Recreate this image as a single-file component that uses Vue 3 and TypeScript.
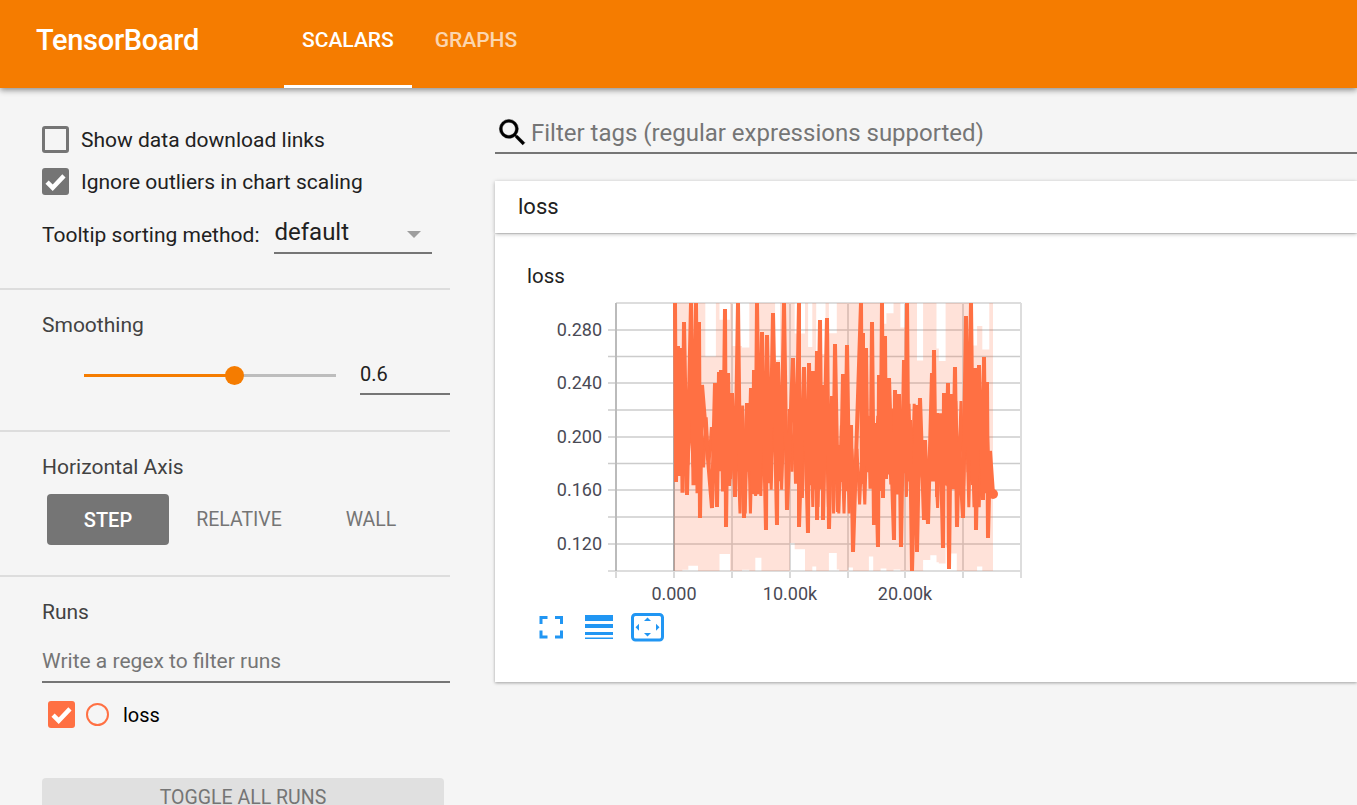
<template>
  <div class="page">
    <header class="topbar">
      <div class="brand">TensorBoard</div>
      <nav class="tabs">
        <div class="tab active">SCALARS</div>
        <div class="tab">GRAPHS</div>
      </nav>
    </header>

    <div class="body">
      <aside class="sidebar">
        <section class="group options">
          <label class="check-row">
            <span class="box"></span>
            <span>Show data download links</span>
          </label>
          <label class="check-row">
            <span class="box checked">
              <svg viewBox="0 0 24 24"><path d="M4.5 12.5l5 5 10-10.500" /></svg>
            </span>
            <span>Ignore outliers in chart scaling</span>
          </label>
          <div class="sort-row">
            <span>Tooltip sorting method:</span>
            <div class="select">
              <span>default</span>
              <i class="caret"></i>
            </div>
          </div>
        </section>

        <section class="group smoothing">
          <div class="group-title">Smoothing</div>
          <div class="slider-row">
            <div class="slider">
              <div class="slider-fill" :style="{ width: smoothing * 100 + '%' }"></div>
              <div class="slider-knob" :style="{ left: smoothing * 100 + '%' }"></div>
            </div>
            <div class="slider-value">{{ smoothing }}</div>
          </div>
        </section>

        <section class="group axis">
          <div class="group-title">Horizontal Axis</div>
          <div class="axis-buttons">
            <button v-for="m in axisModes" :key="m" class="axis-btn" :class="{ on: m === 'STEP' }">{{ m }}</button>
          </div>
        </section>

        <section class="group runs">
          <div class="group-title">Runs</div>
          <div class="regex">Write a regex to filter runs</div>
          <label class="run-row">
            <span class="box run">
              <svg viewBox="0 0 24 24"><path d="M4.5 12.500l5 5 10-10.500" /></svg>
            </span>
            <span class="run-dot"></span>
            <span>loss</span>
          </label>
          <button class="toggle">TOGGLE ALL RUNS</button>
        </section>
      </aside>

      <main class="content">
        <div class="filter">
          <svg class="search" viewBox="0 0 24 24">
            <path d="M15.500 14h-.79l-.28-.27A6.470 6.470 0 0 0 16 9.500 6.500 6.500 0 1 0 9.500 16c1.610 0 3.090-.59 4.230-1.570l.27.28v.79l5 4.990L20.490 19l-4.990-5zm-6 0C7.010 14 5 11.990 5 9.500S7.010 5 9.500 5 14 7.010 14 9.500 11.990 14 9.500 14z" />
          </svg>
          <span>Filter tags (regular expressions supported)</span>
        </div>

        <div class="tag-head">loss</div>
        <div class="card">
          <div class="card-title">loss</div>
          <svg class="chart" viewBox="530 295 500 350" width="500" height="350">
            <defs>
              <clipPath id="plot"><rect x="616" y="303" width="405" height="268" /></clipPath>
            </defs>

            <g class="grid">
              <line v-for="y in gridY" :key="'h' + y" x1="608" x2="1021" :y1="y" :y2="y" />
              <line v-for="x in gridX" :key="'v' + x" :x1="x" :x2="x" y1="303" y2="578" />
            </g>
            <line class="edge" x1="616" x2="1021" y1="303" y2="303" />
            <line class="edge" x1="608" x2="1021" y1="571" y2="571" />
            <line class="edge" x1="1021" x2="1021" y1="303" y2="578" />
            <line class="axis-line" x1="616" x2="616" y1="303" y2="571" />
            <line class="axis-line dark" x1="674" x2="674" y1="303" y2="571" />

            <g clip-path="url(#plot)">
              <path class="raw" :d="rawPath" />
              <path class="body-band" :d="bandPath" />
              <path class="smooth" :d="smoothPath" />
            </g>
            <circle cx="993" cy="494" r="5" fill="#ff7043" />

            <text v-for="t in yLabels" :key="t.label" class="tick" x="602" :y="t.y + 6" text-anchor="end">{{ t.label }}</text>
            <text v-for="t in xLabels" :key="t.label" class="tick" :x="t.x" y="600" text-anchor="middle">{{ t.label }}</text>

            <!-- fullscreen -->
            <path class="ico-stroke" d="M541 624v-6.500h6.500M555 617.500h6.500v6.500M561.500 630.500v6.500h-6.500M547.500 637H541v-6.500" />
            <!-- log scale bars -->
            <g fill="#2196f3">
              <rect x="585" y="615" width="28" height="6" />
              <rect x="585" y="624" width="28" height="4" />
              <rect x="585" y="632" width="28" height="3" />
              <rect x="585" y="637.500" width="28" height="1.500" />
            </g>
            <!-- fit domain -->
            <rect class="ico-stroke" x="632.500" y="614.500" width="30" height="25.500" rx="3" />
            <g fill="#2196f3">
              <path d="M647.500 617.500l3.500 3.500h-7z" />
              <path d="M647.500 636.500l3.500-3.500h-7z" />
              <path d="M635.500 627.200l3.500-3.500v7z" />
              <path d="M659.500 627.200l-3.500-3.500v7z" />
            </g>
          </svg>
        </div>
      </main>
    </div>
  </div>
</template>

<script setup lang="ts">
import { computed, ref } from 'vue'

const smoothing = ref<number>(0.6)
const axisModes: string[] = ['STEP', 'RELATIVE', 'WALL']

const gridY: number[] = [330, 356.5, 383, 410, 437, 463.5, 490, 517, 544]
const gridX: number[] = [616, 674, 732, 790, 848, 905, 963, 1021]

const yLabels = [
  { label: '0.280', y: 330 },
  { label: '0.240', y: 383 },
  { label: '0.200', y: 437 },
  { label: '0.160', y: 490 },
  { label: '0.120', y: 544 }
]
const xLabels = [
  { label: '0.000', x: 674 },
  { label: '10.00k', x: 790 },
  { label: '20.00k', x: 905 }
]

// peaks and dips of the smoothed curve, in page pixels
const tops: Array<[number, number]> = [
  [675, 303], [678, 346], [681, 348], [684, 322], [691, 303], [696, 303], [699, 322], [702, 385],
  [715, 383], [719, 372], [721, 370], [725, 309], [728, 373], [732, 393], [738, 303], [742, 413],
  [747, 403], [751, 388], [754, 370], [757, 303], [762, 332], [767, 335], [773, 313], [778, 362],
  [784, 303], [793, 358], [799, 303], [804, 367], [809, 363], [813, 371], [817, 351], [820, 320],
  [823, 385], [827, 318], [832, 396], [835, 344], [839, 445], [843, 374], [847, 345], [851, 425],
  [861, 303], [863, 333], [866, 348], [869, 416], [872, 322], [875, 423], [879, 375], [882, 303],
  [885, 336], [887, 417], [889, 378], [895, 390], [899, 394], [904, 360], [907, 303], [910, 420],
  [916, 405], [920, 398], [925, 440], [932, 373], [934, 350], [937, 413], [944, 393], [948, 383],
  [951, 394], [955, 367], [959, 442], [966, 316], [971, 303], [975, 368], [979, 365], [984, 357],
  [987, 382], [990, 451]
]
const dips: Array<[number, number]> = [
  [676, 482], [687, 495], [700, 518], [712, 508], [717, 507], [726, 527], [735, 497], [744, 518],
  [753, 494], [766, 530], [777, 525], [787, 510], [799, 527], [808, 533], [817, 520], [823, 520],
  [829, 529], [838, 512], [853, 552], [863, 484], [874, 525], [878, 547], [883, 498], [894, 540],
  [901, 547], [912, 571], [917, 552], [924, 520], [928, 524], [937, 497], [943, 548], [949, 569],
  [957, 527], [963, 518], [976, 530], [983, 500], [988, 538]
]

function makeRandom(seed: number): () => number {
  let s = seed
  return () => {
    s = (s * 1664525 + 1013904223) % 4294967296
    return s / 4294967296
  }
}

const smoothPath = computed<string>(() => {
  const rnd = makeRandom(7)
  const pts = [
    ...tops.map(([x, y]) => ({ x, y, up: true })),
    ...dips.map(([x, y]) => ({ x, y, up: false }))
  ].sort((a, b) => a.x - b.x)
  const out: string[] = []
  pts.forEach((p, i) => {
    const prev = pts[i - 1]
    if (prev && prev.up === p.up) {
      // same kind twice: drop a filler between them so the band stays solid
      const y = p.up ? 470 + rnd() * 25 : 410 + rnd() * 30
      out.push(`${(prev.x + p.x) / 2} ${y.toFixed(1)}`)
    }
    out.push(`${p.x} ${p.y}`)
  })
  out.push('993 494')
  return 'M' + out.join('L')
})

// the solid middle of the curve, uneven in runs of a few pixels
const bandPath = computed<string>(() => {
  const rnd = makeRandom(19)
  const out: string[] = []
  let up = true
  let hi = 400
  let lo = 490
  let left = 0
  for (let x = 675; x <= 990; x += 2.6) {
    if (left <= 0) {
      hi = 395 + rnd() * 60
      lo = 465 + rnd() * 50
      left = 3 + Math.floor(rnd() * 6)
    }
    out.push(`${x.toFixed(1)} ${(up ? hi : lo).toFixed(1)}`)
    up = !up
    left--
  }
  return 'M' + out.join('L')
})

// raw values read as uneven blocks, a single path so the tint never stacks
const rawPath = computed<string>(() => {
  const rnd = makeRandom(42)
  let d = ''
  let x = 674
  while (x < 993) {
    const w = Math.min(2 + rnd() * 9, 993 - x)
    const top = rnd() < 0.6 ? 300 : 312 + rnd() * 50
    const bottom = rnd() < 0.6 ? 575 : 540 + rnd() * 30
    d += `M${x.toFixed(1)} ${top.toFixed(1)}H${(x + w).toFixed(1)}V${bottom.toFixed(1)}H${x.toFixed(1)}Z`
    x += w
  }
  return d
})
</script>

<style scoped>
.page {
  height: 805px;
  overflow: hidden;
  display: flex;
  flex-direction: column;
  background: #f5f5f5;
  font-family: Roboto, "Liberation Sans", sans-serif;
  color: #212121;
}

.topbar {
  flex: none;
  height: 88px;
  display: flex;
  align-items: stretch;
  background: #f57c00;
  color: #fff;
  padding-left: 36px;
  box-shadow: 0 2px 6px rgba(0, 0, 0, 0.45);
  position: relative;
  z-index: 2;
}

.brand {
  width: 248px;
  font-size: 29px;
  font-weight: 500;
  letter-spacing: -0.3px;
  line-height: 80px;
}

.tabs {
  display: flex;
}

.tab {
  padding: 0 18px;
  font-size: 21px;
  font-weight: 500;
  line-height: 80px;
  color: rgba(255, 255, 255, 0.7);
  border-bottom: 3px solid transparent;
  margin-right: 5px;
}

.tab.active {
  color: #fff;
  border-bottom-color: #fff;
}

.body {
  flex: 1;
  display: flex;
  min-height: 0;
}

.sidebar {
  flex: none;
  width: 450px;
  font-size: 21px;
}

.group {
  border-bottom: 2px solid #ddd;
  padding-left: 42px;
}

.options {
  height: 202px;
  padding-top: 38px;
  box-sizing: border-box;
}

.check-row {
  display: flex;
  align-items: center;
  gap: 12px;
  height: 27px;
  margin-bottom: 15px;
}

.box {
  width: 27px;
  height: 27px;
  box-sizing: border-box;
  border: 3px solid #757575;
  border-radius: 3px;
  display: block;
  flex: none;
}

.box svg {
  display: block;
  width: 100%;
  height: 100%;
  fill: none;
  stroke: #fff;
  stroke-width: 4;
}

.box.checked {
  background: #757575;
  border: 0;
}

.sort-row {
  display: flex;
  align-items: center;
  gap: 15px;
  margin-top: 21px;
}

.select {
  width: 158px;
  height: 38px;
  box-sizing: border-box;
  border-bottom: 2px solid #757575;
  font-size: 24px;
  line-height: 32px;
  position: relative;
}

.caret {
  position: absolute;
  right: 11px;
  top: 15px;
  border-left: 7px solid transparent;
  border-right: 7px solid transparent;
  border-top: 7px solid #9e9e9e;
}

.group-title {
  color: #424242;
}

.smoothing {
  height: 142px;
  box-sizing: border-box;
  padding-top: 23px;
}

.slider-row {
  display: flex;
  align-items: flex-start;
  padding-left: 42px;
  margin-top: 19px;
}

.slider {
  width: 252px;
  height: 3px;
  margin-top: 18px;
  background: #bdbdbd;
  position: relative;
}

.slider-fill {
  height: 100%;
  background: #f57c00;
}

.slider-knob {
  position: absolute;
  top: -8px;
  width: 19px;
  height: 19px;
  margin-left: -10px;
  border-radius: 50%;
  background: #f57c00;
}

.slider-value {
  margin-left: 24px;
  width: 90px;
  height: 39px;
  box-sizing: border-box;
  border-bottom: 2px solid #757575;
  font-size: 20px;
  line-height: 37px;
  color: #212121;
}

.axis {
  height: 145px;
  box-sizing: border-box;
  padding-top: 23px;
}

.axis-buttons {
  display: flex;
  margin: 15px 0 0 5px;
}

.axis-btn {
  width: 122px;
  height: 51px;
  margin-right: 10px;
  border: 0;
  border-radius: 4px;
  background: transparent;
  color: #757575;
  font: 400 19.500px Roboto, "Liberation Sans", sans-serif;
}

.axis-btn.on {
  background: #757575;
  color: #fff;
  font-weight: 500;
  font-size: 20px;
  margin-right: 9px;
}

.runs {
  border-bottom: 0;
  padding-top: 23px;
}

.regex {
  margin-top: 25px;
  height: 32px;
  border-bottom: 2px solid #757575;
  color: #757575;
  line-height: 24px;
}

.run-row {
  display: flex;
  align-items: center;
  height: 27px;
  margin: 18px 0 0 6px;
  font-size: 20px;
  color: #000;
}

.box.run {
  background: #ff7043;
  border: 0;
}

.run-dot {
  width: 23px;
  height: 23px;
  box-sizing: border-box;
  border: 2px solid #ff7043;
  border-radius: 50%;
  margin: 0 14px 0 11px;
}

.toggle {
  display: block;
  width: 402px;
  height: 38px;
  margin-top: 50px;
  border: 0;
  border-radius: 4px;
  background: #e0e0e0;
  color: #757575;
  font: 400 19.500px Roboto, "Liberation Sans", sans-serif;
}

.content {
  flex: 1;
  min-width: 0;
  padding-left: 45px;
}

.filter {
  height: 66px;
  box-sizing: border-box;
  border-bottom: 2px solid #757575;
  display: flex;
  align-items: center;
  padding-top: 25px;
  font-size: 24px;
  color: #757575;
}

.search {
  width: 35px;
  height: 35px;
  flex: none;
  margin-right: 1px;
  fill: #000;
  stroke: #000;
  stroke-width: 0.3;
}

.tag-head {
  margin-top: 27px;
  height: 52px;
  background: #fff;
  padding-left: 23px;
  font-size: 22px;
  line-height: 52px;
  color: #212121;
  box-shadow: 0 1px 4px rgba(0, 0, 0, 0.3);
  position: relative;
}

.card {
  margin-top: 1px;
  height: 448px;
  background: #fff;
  box-shadow: 0 1px 3px rgba(0, 0, 0, 0.35);
  padding: 29px 0 0 32px;
  box-sizing: border-box;
}

.card-title {
  font-size: 20.500px;
  line-height: 26px;
  color: #212121;
}

.chart {
  display: block;
  margin: 6px 0 0 3px;
}

.grid line {
  stroke: #ccc;
  stroke-width: 1.5;
}

.edge {
  stroke: #ddd;
  stroke-width: 2;
}

.axis-line {
  stroke: #bbb;
  stroke-width: 2;
}

.axis-line.dark {
  stroke: #aaa;
}

.raw {
  fill: #ff7043;
  fill-opacity: 0.2;
}

.body-band {
  fill: none;
  stroke: #ff7043;
  stroke-width: 3;
  stroke-linejoin: bevel;
}

.smooth {
  fill: none;
  stroke: #ff7043;
  stroke-width: 4;
  stroke-linejoin: bevel;
}

.tick {
  font-size: 18px;
  fill: #4a4a55;
}

.ico-stroke {
  fill: none;
  stroke: #2196f3;
  stroke-width: 3;
}
</style>
